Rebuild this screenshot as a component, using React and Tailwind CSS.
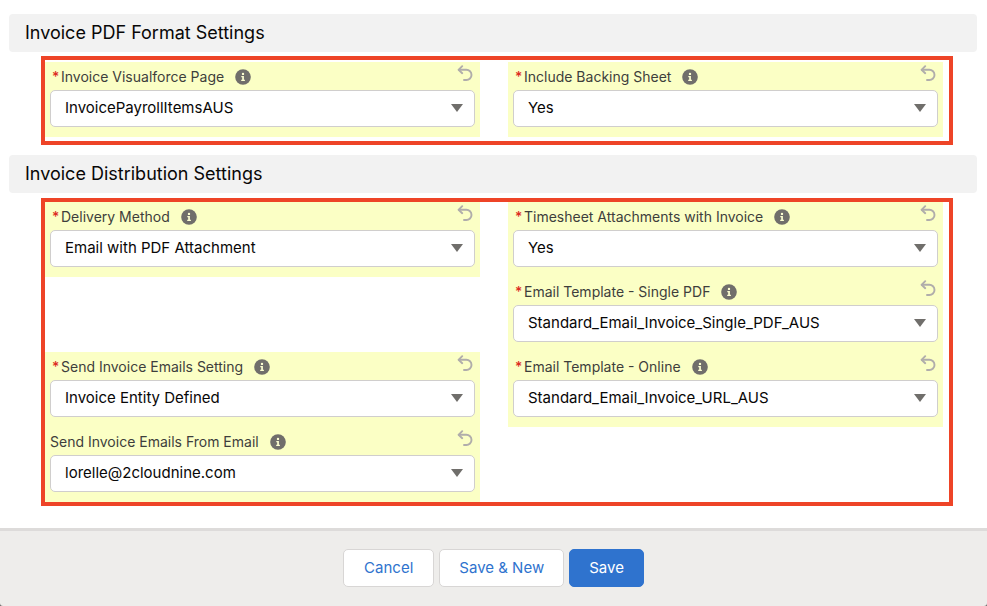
import React, { useId, useState } from 'react'

function InfoIcon() {
    return (
        <svg viewBox="0 0 16 16" className="w-4 h-4 ml-[11px] shrink-0" aria-hidden="true">
            <circle cx="8" cy="8" r="7.8" fill="#706e6b" />
            <circle cx="8" cy="4.9" r="1.2" fill="#fdffd2" />
            <path d="M6.3 7h2.6v3.7h1V12H6.2v-1.3h1V8.2h-.9z" fill="#fdffd2" />
        </svg>
    )
}

function UndoIcon() {
    return (
        <svg viewBox="0 0 16 16" className="w-4 h-4" fill="none" stroke="#b0adab" strokeWidth="1.9" strokeLinecap="round" strokeLinejoin="round" aria-hidden="true">
            <path d="M5.2 1.2 1.6 4.8l3.6 3.4" />
            <path d="M1.8 4.8h7.6a5.1 5.1 0 0 1 0 10.2H7" />
        </svg>
    )
}

function Field({ label, required, value, className = '' }) {
    const id = useId()
    const [current, setCurrent] = useState(value)

    return (
        <div className={`bg-[#fbffc5] px-[5px] pb-[10px] ${className}`}>
            <div className="flex items-center h-7 pt-[1px]">
                {required && <span className="w-[11px] pl-[2px] text-sm leading-5 font-medium text-[#dc2a22]">*</span>}
                <label htmlFor={id} className="text-sm leading-5 text-[#3e3e3c]">{label}</label>
                <InfoIcon />
                <button type="button" aria-label={`Undo ${label}`} onClick={() => setCurrent(value)} className="ml-auto mr-[2px] mb-[7px]">
                    <UndoIcon />
                </button>
            </div>
            <div className="relative">
                <select
                    id={id}
                    value={current}
                    onChange={(e) => setCurrent(e.target.value)}
                    className="block appearance-none w-full h-[37px] pl-[14px] pr-8 rounded-[5px] border border-[#d0cecd] bg-white text-[15px] text-[#080707] outline-none"
                >
                    <option>{value}</option>
                </select>
                <svg viewBox="0 0 12 8" className="absolute right-3 top-[14px] w-3 h-2 pointer-events-none" aria-hidden="true">
                    <path d="M0 0h12L6 8z" fill="#706e6b" />
                </svg>
            </div>
        </div>
    )
}

function SectionTitle({ children }) {
    return <h2 className="ml-[9px] mr-[10px] h-[38px] px-4 flex items-center rounded-[4px] bg-[#f2f2f2] text-lg text-[#080707]">{children}</h2>
}

function App() {
    return (
        <div className="min-h-screen flex flex-col bg-white font-[Inter,sans-serif]">
            <main className="grow pt-[14px]">
                <SectionTitle>Invoice PDF Format Settings</SectionTitle>
                <div className="mt-1 mb-[10px] ml-[41px] mr-[34px] grid grid-cols-2 gap-x-7 border-4 border-[#ee4427] pt-[2px] pb-1 pr-[6px]">
                    <Field label="Invoice Visualforce Page" required value="InvoicePayrollItemsAUS" />
                    <Field label="Include Backing Sheet" required value="Yes" />
                </div>

                <SectionTitle>Invoice Distribution Settings</SectionTitle>
                <div className="mt-[5px] mb-[22px] ml-[41px] mr-[34px] grid grid-cols-2 gap-x-7 border-4 border-[#ee4427] pr-[6px]">
                    <Field label="Delivery Method" required value="Email with PDF Attachment" />
                    <Field label="Timesheet Attachments with Invoice" required value="Yes" />
                    <Field label="Email Template - Single PDF" required value="Standard_Email_Invoice_Single_PDF_AUS" className="col-start-2" />
                    <Field label="Send Invoice Emails Setting" required value="Invoice Entity Defined" />
                    <Field label="Email Template - Online" required value="Standard_Email_Invoice_URL_AUS" />
                    <Field label="Send Invoice Emails From Email" value="lorelle@2cloudnine.com" />
                </div>
            </main>

            <div className="bg-[#6b6a69]">
                <footer className="flex justify-center gap-[5px] rounded-b-[3px] border-t-[3px] border-[#dddbda] bg-[#eeedeb] pt-[18px] pb-[19px] text-[15px]">
                    <button type="button" className="h-[38px] px-5 rounded-[5px] border border-[#d8d6d5] bg-white text-[#2f73ce]">Cancel</button>
                    <button type="button" className="h-[38px] px-[19px] rounded-[5px] border border-[#d8d6d5] bg-white text-[#2f73ce]">Save & New</button>
                    <button type="button" className="h-[38px] px-[19px] rounded-[5px] border border-[#2f73ce] bg-[#2f73ce] text-white">Save</button>
                </footer>
            </div>
        </div>
    )
}

export default App
